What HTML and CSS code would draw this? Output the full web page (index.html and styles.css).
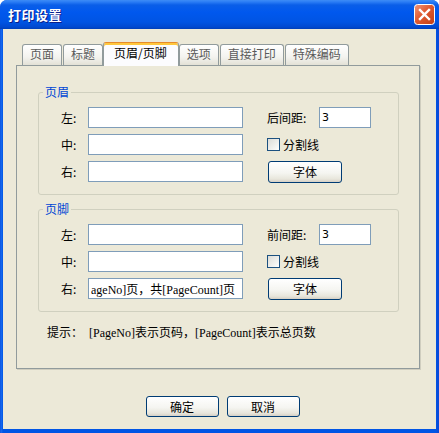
FILE: index.html
```html
<!DOCTYPE html>
<html lang="zh-CN">
<head>
    <meta charset="UTF-8">
    <meta name="viewport" content="width=device-width, initial-scale=1.0">
    <title>打印设置</title>
    <link rel="stylesheet" href="styles.css">
</head>
<body>
    <div class="window">
        <div class="titlebar">
            <span class="title">打印设置</span>
            <button class="close" type="button">
                <svg width="21" height="21" viewBox="0 0 21 21">
                    <defs>
                        <linearGradient id="closeFill" x1="0" y1="0" x2="1" y2="1">
                            <stop offset="0" stop-color="#f2977a"/>
                            <stop offset="0.45" stop-color="#e05a31"/>
                            <stop offset="1" stop-color="#c23f14"/>
                        </linearGradient>
                    </defs>
                    <rect x="0.5" y="0.5" width="20" height="20" rx="3" fill="url(#closeFill)" stroke="#ffffff"/>
                    <path d="M6 6 L15 15 M15 6 L6 15" stroke="#ffffff" stroke-width="2.4" stroke-linecap="square"/>
                </svg>
            </button>
        </div>

        <div class="client">
            <div class="tabs">
                <div class="tab">页面</div>
                <div class="tab">标题</div>
                <div class="tab active">页眉/页脚</div>
                <div class="tab">选项</div>
                <div class="tab">直接打印</div>
                <div class="tab">特殊编码</div>
            </div>

            <div class="panel">
                <fieldset class="group">
                    <legend>页眉</legend>
                    <div class="grid">
                        <label class="lbl">左:</label>
                        <input class="field" type="text">
                        <label class="rlbl">后间距:</label>
                        <input class="field num" type="text" value="3">

                        <label class="lbl">中:</label>
                        <input class="field" type="text">
                        <label class="check"><span class="box"></span>分割线</label>

                        <label class="lbl">右:</label>
                        <input class="field" type="text">
                        <button class="btn font-btn" type="button">字体</button>
                    </div>
                </fieldset>

                <fieldset class="group">
                    <legend>页脚</legend>
                    <div class="grid">
                        <label class="lbl">左:</label>
                        <input class="field" type="text">
                        <label class="rlbl">前间距:</label>
                        <input class="field num" type="text" value="3">

                        <label class="lbl">中:</label>
                        <input class="field" type="text">
                        <label class="check"><span class="box"></span>分割线</label>

                        <label class="lbl">右:</label>
                        <input class="field" type="text" value="ageNo]页，共[PageCount]页">
                        <button class="btn font-btn" type="button">字体</button>
                    </div>
                </fieldset>

                <p class="hint">提示：&nbsp; [PageNo]表示页码，[PageCount]表示总页数</p>
            </div>

            <div class="actions">
                <button class="btn" type="button">确定</button>
                <button class="btn" type="button">取消</button>
            </div>
        </div>
    </div>
</body>
</html>
```

FILE: styles.css
```css
body {
    margin: 0;
    font-family: "Noto Sans CJK SC", sans-serif;
    font-size: 12px;
    line-height: 14px;
    color: #000;
    background: #fff;
}
.window {
    width: 439px;
    height: 433px;
    box-sizing: border-box;
    display: flex;
    flex-direction: column;
    background: linear-gradient(90deg, #0848d8 0, #1a6cf0 1px, #0055e5 3px, #0055e5 436px, #0a4ad8 438px);
    border-radius: 7px 7px 0 0;
}
.titlebar {
    height: 29px;
    display: flex;
    align-items: center;
    justify-content: space-between;
    padding: 0 4px 0 8px;
    border-radius: 7px 7px 0 0;
    background: linear-gradient(#3d8cf6 0, #2a7cf5 2px, #0a5ee8 5px, #0058ee 12px, #0054e3 22px, #0049d0 27px, #003fb8 29px);
}
.title {
    color: #fff;
    font-size: 13px;
    font-weight: bold;
    letter-spacing: 0.5px;
    text-shadow: 1px 1px 0 #0a1e8a;
    padding-top: 1px;
}
.close {
    width: 21px;
    height: 21px;
    padding: 0;
    border: none;
    background: none;
    display: block;
}
.close svg {
    display: block;
}
.client {
    flex: 1;
    margin: 0 3px 4px;
    background: #ece9d8;
    padding: 13px 0 0 13px;
}
.tabs {
    display: flex;
    align-items: flex-end;
    height: 23px;
    margin-left: 6px;
}
.tab {
    box-sizing: border-box;
    height: 21px;
    padding: 0 7px 2px;
    margin-right: 1px;
    display: flex;
    align-items: center;
    border: 1px solid #919b9c;
    border-bottom: none;
    border-radius: 3px 3px 0 0;
    background: linear-gradient(#ffffff, #f3f3ef 60%, #e3e1d6);
    color: #5a5a5a;
}
.tab.active {
    position: relative;
    z-index: 1;
    height: 24px;
    margin: 0 0 -1px -1px;
    padding: 0 11px 3px 10px;
    border-top: 1px solid #e68b2c;
    box-shadow: inset 0 2px 0 #ffc73c;
    background: #fcfcfe;
    color: #000;
}
.panel {
    box-sizing: border-box;
    width: 404px;
    height: 304px;
    border: 1px solid #919b9c;
    box-shadow: 1px 1px 0 #d0cebf;
    padding: 19px 20px 0 21px;
}
.group {
    margin: 0 0 7px;
    padding: 8px 0 12px 4px;
    border: 1px solid #d0d0bf;
    border-radius: 3px;
    min-width: 0;
}
.group legend {
    padding: 0 2px;
    color: #0046d5;
    line-height: 14px;
}
.grid {
    display: grid;
    grid-template-columns: 27px 155px 24px 52px 52px;
    grid-auto-rows: 21px;
    row-gap: 6px;
    margin-left: 18px;
    align-items: center;
}
.lbl {
    grid-column: 1;
}
.rlbl {
    grid-column: 4;
}
.field {
    box-sizing: border-box;
    width: 100%;
    height: 21px;
    margin: 0;
    padding: 0 2px;
    border: 1px solid #7f9db9;
    background: #fff;
    font-family: "Liberation Serif", "Noto Sans CJK SC", serif;
    font-size: 12px;
    color: #000;
    outline: none;
}
.field.num {
    font-family: "DejaVu Sans", "Liberation Sans", sans-serif;
    font-size: 11px;
}
.check {
    grid-column: 4 / 6;
    display: flex;
    align-items: center;
    gap: 3px;
}
.box {
    box-sizing: border-box;
    width: 13px;
    height: 13px;
    border: 1px solid #1c5180;
    background: linear-gradient(135deg, #dcdcd7, #f4f4f1 70%, #ffffff);
}
.btn {
    box-sizing: border-box;
    width: 73px;
    height: 21px;
    padding: 0;
    border: 1px solid #003c74;
    border-radius: 3px;
    background: linear-gradient(#ffffff, #f5f5f1 55%, #e8e6dc 85%, #d6d0c5);
    font-family: "Noto Sans CJK SC", sans-serif;
    font-size: 12px;
    line-height: 14px;
    color: #000;
}
.font-btn {
    grid-column: 4 / 6;
    width: 74px;
    height: 22px;
    margin-left: 1px;
    align-self: start;
}
.hint {
    margin: 14px 0 0 9px;
    font-family: "Liberation Serif", "Noto Sans CJK SC", serif;
    font-size: 12px;
    line-height: 14px;
}
.actions {
    display: flex;
    justify-content: center;
    gap: 8px;
    margin-top: 27px;
    padding-right: 7px;
}
```
